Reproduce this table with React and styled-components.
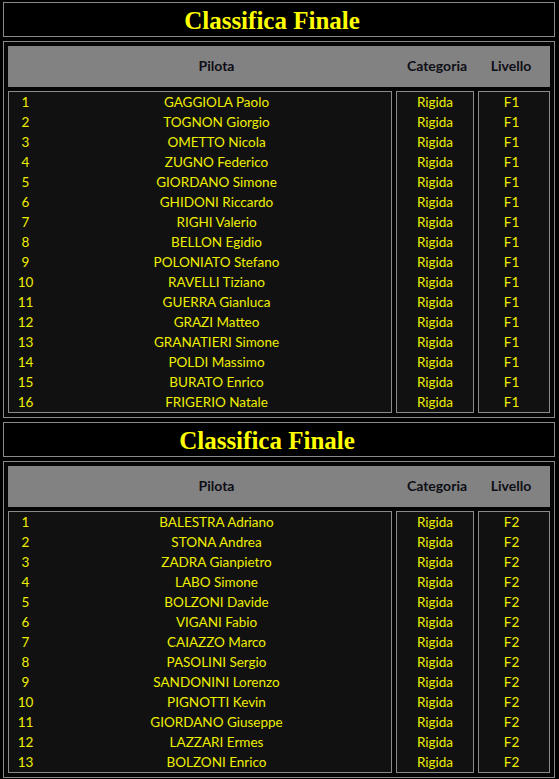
import React from "react";
import styled, { createGlobalStyle } from "styled-components";

const GlobalStyle = createGlobalStyle`
  html, body {
    margin: 0;
    padding: 0;
    background: #000;
  }
  body {
    font-family: Lato, "Open Sans", sans-serif;
  }
`;

const Page = styled.div`
  display: flex;
  flex-direction: column;
  gap: 4px;
  padding: 2px 4px 4px 3px;
  width: 552px;
`;

const TitleBox = styled.div`
  box-sizing: border-box;
  height: 35px;
  border: 1px solid #8a8a8a;
  display: flex;
  align-items: center;
  justify-content: center;
  padding: 2px ${(p) => p.$shift}px 0 0;
  font-family: "Liberation Serif", serif;
  font-weight: bold;
  font-size: 25px;
  color: #ffff00;
`;

const Board = styled.div`
  box-sizing: border-box;
  border: 1px solid #8a8a8a;
  padding: 4px;
  display: flex;
  flex-direction: column;
  gap: 4px;
  background: #050505;
`;

const Columns = styled.div`
  display: grid;
  grid-template-columns: 384px 78px 72px;
  column-gap: 4px;
`;

const HeaderRow = styled(Columns)`
  height: 41px;
  background: #828282;
  align-items: center;
  color: #0e0e16;
  font-size: 14px;
  font-weight: 700;
  text-align: center;
  padding-bottom: 2px;
  box-sizing: border-box;
`;

const HeaderCell = styled.div`
  padding-left: ${(p) => p.$left || 0}px;
  padding-right: ${(p) => p.$right || 0}px;
`;

const Cell = styled.div`
  border: 1px solid #8a8a8a;
  background: #111;
  padding-right: ${(p) => p.$right || 0}px;
`;

const Row = styled.div`
  height: 20px;
  line-height: 20px;
  font-size: 13.5px;
  color: #eeee00;
  text-align: center;
`;

const PilotRow = styled(Row)`
  display: grid;
  grid-template-columns: 33px 1fr;
`;

const Ranking = ({ shift, level, pilots }) => (
  <>
    <TitleBox $shift={shift}>Classifica Finale</TitleBox>
    <Board>
      <HeaderRow>
        <HeaderCell $left={33}>Pilota</HeaderCell>
        <HeaderCell $left={4}>Categoria</HeaderCell>
        <HeaderCell $right={6}>Livello</HeaderCell>
      </HeaderRow>
      <Columns>
        <Cell>
          {pilots.map((name, i) => (
            <PilotRow key={name}>
              <span>{i + 1}</span>
              <span>{name}</span>
            </PilotRow>
          ))}
        </Cell>
        <Cell>
          {pilots.map((name) => (
            <Row key={name}>Rigida</Row>
          ))}
        </Cell>
        <Cell $right={5}>
          {pilots.map((name) => (
            <Row key={name}>{level}</Row>
          ))}
        </Cell>
      </Columns>
    </Board>
  </>
);

const f1 = [
  "GAGGIOLA Paolo",
  "TOGNON Giorgio",
  "OMETTO Nicola",
  "ZUGNO Federico",
  "GIORDANO Simone",
  "GHIDONI Riccardo",
  "RIGHI Valerio",
  "BELLON Egidio",
  "POLONIATO Stefano",
  "RAVELLI Tiziano",
  "GUERRA Gianluca",
  "GRAZI Matteo",
  "GRANATIERI Simone",
  "POLDI Massimo",
  "BURATO Enrico",
  "FRIGERIO Natale",
];

const f2 = [
  "BALESTRA Adriano",
  "STONA Andrea",
  "ZADRA Gianpietro",
  "LABO Simone",
  "BOLZONI Davide",
  "VIGANI Fabio",
  "CAIAZZO Marco",
  "PASOLINI Sergio",
  "SANDONINI Lorenzo",
  "PIGNOTTI Kevin",
  "GIORDANO Giuseppe",
  "LAZZARI Ermes",
  "BOLZONI Enrico",
];

const App = () => (
  <>
    <GlobalStyle />
    <Page>
      <Ranking shift={14} level="F1" pilots={f1} />
      <Ranking shift={24} level="F2" pilots={f2} />
    </Page>
  </>
);

export default App;
